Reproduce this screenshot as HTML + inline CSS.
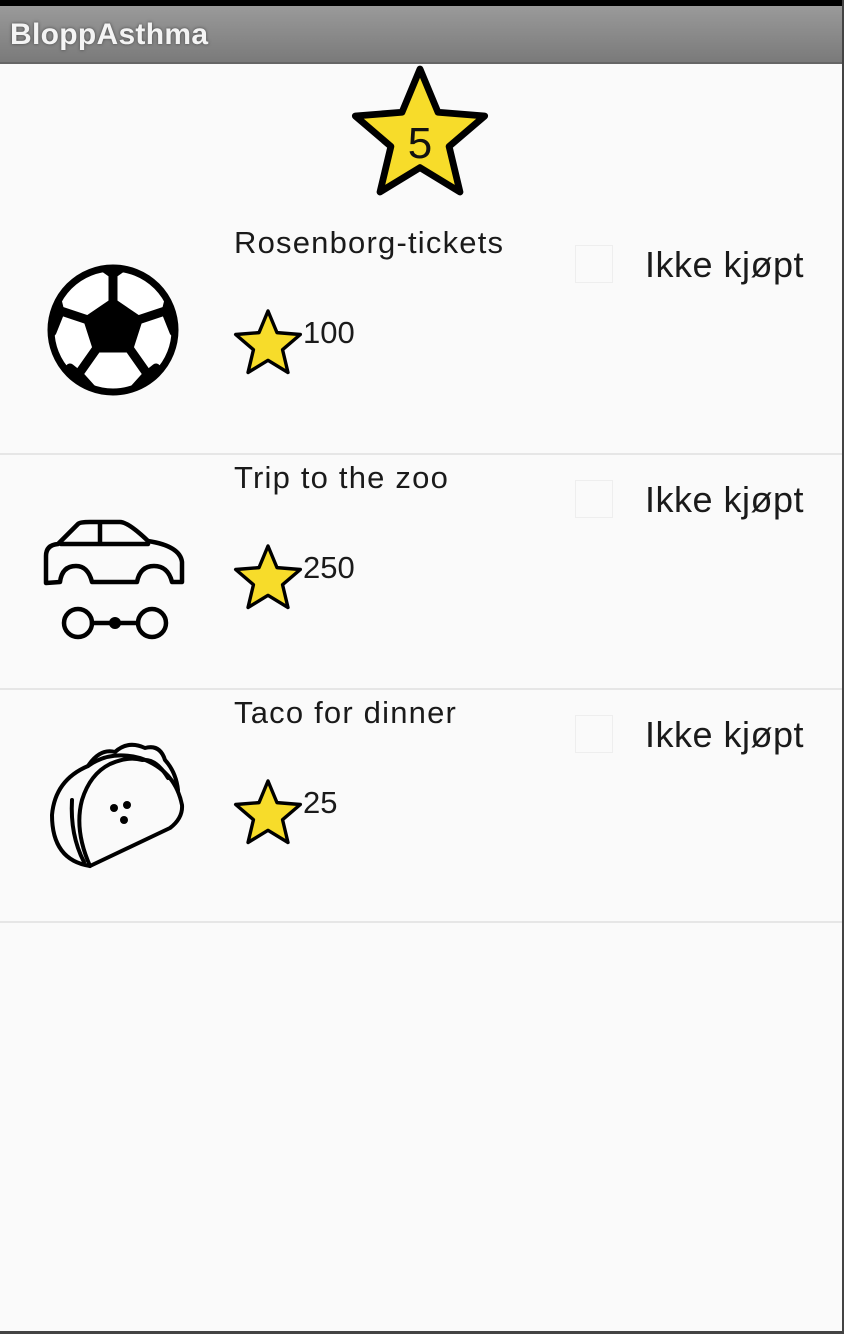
<!DOCTYPE html>
<html><head><meta charset="utf-8"><style>
*{margin:0;padding:0;box-sizing:border-box}
body{width:844px;height:1334px;background:#fafafa;position:relative;overflow:hidden;font-family:"Liberation Sans",sans-serif;color:#1a1a1a}
.top{position:absolute;left:0;top:0;width:844px;height:6px;background:#000}
.bar{position:absolute;left:0;top:6px;width:844px;height:58px;background:linear-gradient(#9a9a9a,#7a7a7a);border-bottom:2px solid #666}
.bar span{position:absolute;left:10px;top:12px;font-size:30px;font-weight:bold;color:#f4f4f4;text-shadow:0 0 3px #444;letter-spacing:0.3px}
.t{position:absolute;font-size:31px;letter-spacing:1.2px}
.n{position:absolute;font-size:31px}
.k{position:absolute;font-size:36px;left:645px;letter-spacing:0.5px}
.cb{position:absolute;left:575px;width:38px;height:38px;border:1px solid #eee}
.sep{position:absolute;left:0;width:842px;height:2px;background:#e6e6e6}
.r{position:absolute;right:0;top:0;width:2px;height:1334px;background:#444}
.b{position:absolute;left:0;bottom:0;width:844px;height:3px;background:#444}
</style></head><body>
<div class="top"></div>
<div class="bar"><span>BloppAsthma</span></div>
<svg width="844" height="1334" style="position:absolute;left:0;top:0">
<defs><polygon id="st" points="0,-1 0.2645,-0.364 0.951,-0.309 0.428,0.139 0.588,0.809 0,0.45 -0.588,0.809 -0.428,0.139 -0.951,-0.309 -0.2645,-0.364"/>
<clipPath id="bc"><circle cx="113" cy="330" r="64"/></clipPath></defs>
<g transform="translate(420,137) scale(68)"><use href="#st" fill="#f7dc2a" stroke="#000" stroke-width="0.1" stroke-linejoin="round"/></g>
<text x="420" y="158" font-family="Liberation Sans" font-size="44" text-anchor="middle" fill="#111">5</text>
<g transform="translate(268,345) scale(34)"><use href="#st" fill="#f7dc2a" stroke="#000" stroke-width="0.1" stroke-linejoin="round"/></g>
<g transform="translate(268,580) scale(34)"><use href="#st" fill="#f7dc2a" stroke="#000" stroke-width="0.1" stroke-linejoin="round"/></g>
<g transform="translate(268,815) scale(34)"><use href="#st" fill="#f7dc2a" stroke="#000" stroke-width="0.1" stroke-linejoin="round"/></g>
<!-- soccer ball -->
<circle cx="113" cy="330" r="64" fill="#fff"/>
<g clip-path="url(#bc)" fill="#000" stroke="#000" stroke-width="9" stroke-linejoin="round">
<polygon points="113,303 138,320 129,348 97,348 88,320"/>
<path d="M113,303 L113,270 M138,320 L168,310 M129,348 L148,375 M97,348 L78,375 M88,320 L58,310" fill="none"/>
<polygon points="96,262 130,262 113,274"/>
<polygon points="170,296 184,318 174,332 166,312"/>
<polygon points="156,368 150,394 128,396 146,376"/>
<polygon points="70,368 76,394 98,396 80,376"/>
<polygon points="56,296 42,318 52,332 60,312"/>
</g>
<circle cx="113" cy="330" r="62" fill="none" stroke="#000" stroke-width="7"/>
<!-- car -->
<g fill="none" stroke="#000" stroke-width="4.5" stroke-linejoin="round" stroke-linecap="round">
<path d="M46,583 L46,556 Q46,545 58,544 L78,524 Q80,522 90,522 L120,522 Q128,522 148,541 Q180,546 182,562 L182,582 L172,582 Q168,566 154,566 Q140,566 137,582 L92,582 Q88,566 76,566 Q62,566 60,582 Z"/>
<path d="M61,544 L148,544 M100,523 L100,544"/>
<circle cx="78" cy="623" r="14"/><circle cx="152" cy="623" r="14"/>
<path d="M92,623 L138,623"/>
</g>
<circle cx="115" cy="623" r="6" fill="#000"/>
<!-- taco -->
<g fill="none" stroke="#000" stroke-width="4" stroke-linejoin="round" stroke-linecap="round">
<path d="M90,866 Q52,860 52,815 Q55,780 88,766 Q110,750 140,758 Q175,770 182,805 Q183,818 170,828 L90,866 Z"/>
<path d="M88,766 Q100,748 115,752 Q128,740 145,748 Q160,744 165,760 Q176,772 178,790"/>
<path d="M90,866 Q74,830 82,800 Q90,774 110,764 Q128,756 142,760 Q156,758 168,778"/>
<path d="M72,800 Q70,835 84,862"/>
</g>
<circle cx="114" cy="808" r="4" fill="#000"/><circle cx="127" cy="805" r="4" fill="#000"/><circle cx="124" cy="820" r="4" fill="#000"/>
</svg>
<div class="t" style="left:234px;top:225px">Rosenborg-tickets</div>
<div class="n" style="left:303px;top:315px">100</div>
<div class="cb" style="top:245px"></div>
<div class="k" style="top:244px">Ikke kjøpt</div>
<div class="sep" style="top:453px"></div>
<div class="t" style="left:234px;top:460px">Trip to the zoo</div>
<div class="n" style="left:303px;top:550px">250</div>
<div class="cb" style="top:480px"></div>
<div class="k" style="top:479px">Ikke kjøpt</div>
<div class="sep" style="top:688px"></div>
<div class="t" style="left:234px;top:695px">Taco for dinner</div>
<div class="n" style="left:303px;top:785px">25</div>
<div class="cb" style="top:715px"></div>
<div class="k" style="top:714px">Ikke kjøpt</div>
<div class="sep" style="top:921px"></div>
<div class="r"></div><div class="b"></div>
</body></html>
